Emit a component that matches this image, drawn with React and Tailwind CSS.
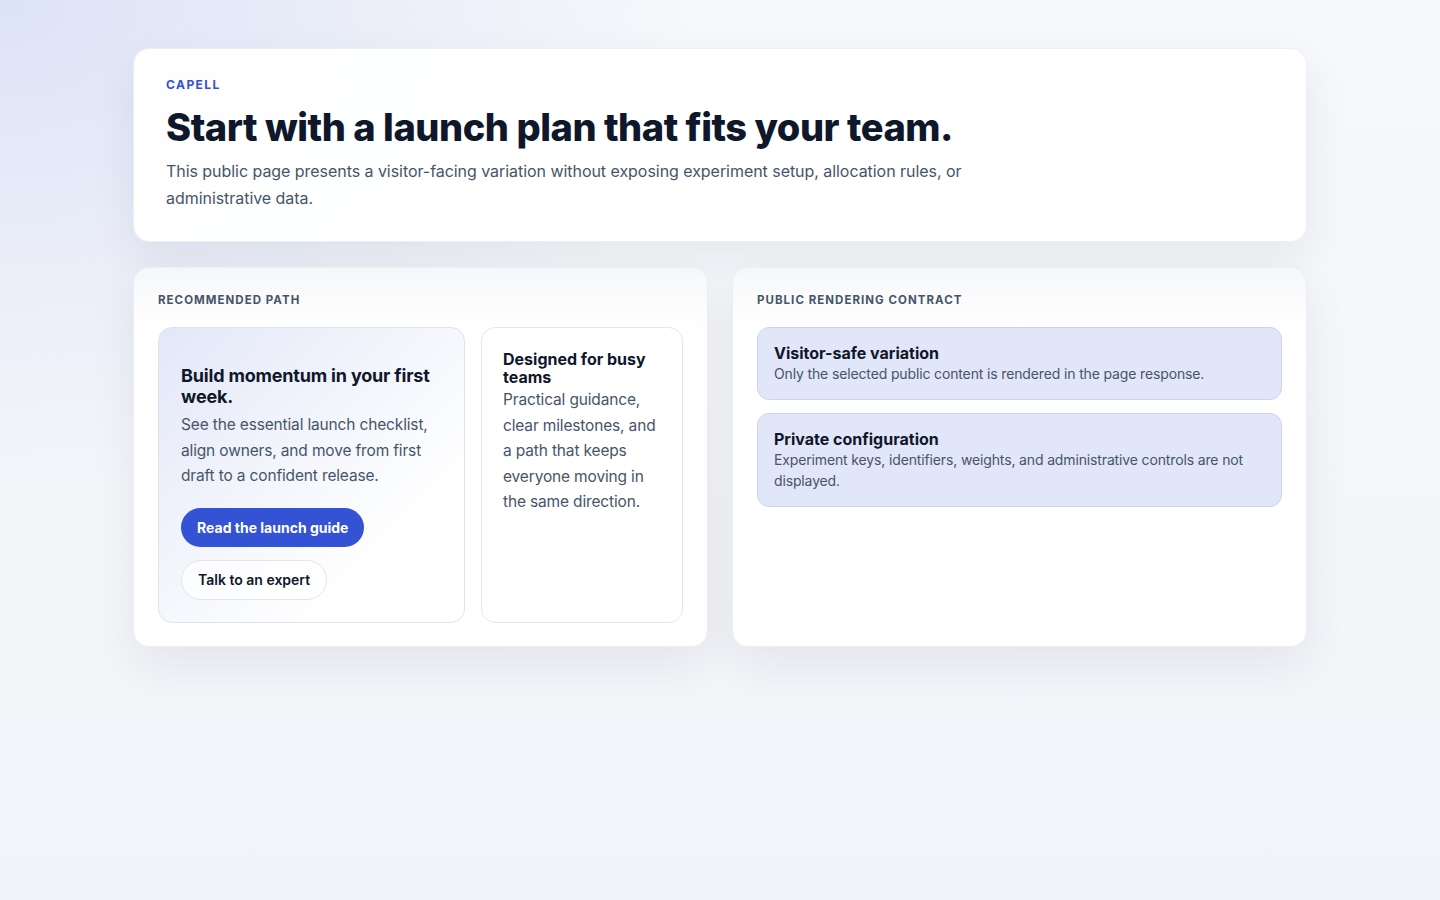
export default function App() {
  return (
    <div
      className="min-h-screen w-full bg-[radial-gradient(ellipse_700px_500px_at_0%_0%,#dde3f7,rgba(240,242,250,0)_100%),linear-gradient(180deg,#f7f8fb,#f3f4f9)] pt-12 pb-12 text-[#0f172a]"
      style={{ fontFamily: 'Inter, "Noto Sans", "Liberation Sans", sans-serif' }}
    >
      <div className="mx-auto flex w-[1174px] flex-col gap-[25px]">
        {/* Hero */}
        <section className="rounded-2xl border border-[#eceef3] bg-white/95 px-8 pt-[28px] pb-[29px] shadow-[0_18px_45px_rgba(15,23,42,0.07)]">
          <div className="text-[12px] font-bold uppercase leading-[16px] tracking-[0.12em] text-[#3450d6]">
            Capell
          </div>
          <h1 className="mt-[11px] text-[38px] font-extrabold leading-[46px] tracking-[-0.012em] text-[#0f172a]">
            Start with a launch plan that fits your team.
          </h1>
          <p className="mt-[8px] max-w-[830px] text-[16px] leading-[27px] tracking-[-0.003em] text-[#475569]">
            This public page presents a visitor-facing variation without exposing experiment setup, allocation rules, or administrative data.
          </p>
        </section>

        <div className="grid grid-cols-2 gap-6">
          {/* Recommended path */}
          <section className="h-[380px] rounded-2xl border border-[#eceef3] bg-[linear-gradient(180deg,#f6f7f9_0px,#ffffff_60px)] p-6 shadow-[0_18px_45px_rgba(15,23,42,0.07)]">
            <div className="text-[11.5px] font-bold uppercase leading-[16px] tracking-[0.09em] text-[#475569]">
              Recommended path
            </div>
            <div className="mt-[19px] grid h-[295px] grid-cols-[307px_1fr] gap-4">
              <div className="rounded-[14px] border border-[#dfe2ea] bg-[linear-gradient(135deg,#e3e7f8_0%,#f4f6fc_45%,#ffffff_75%)] px-[22px] pt-[37px] pb-[22px]">
                <h2 className="text-[18px] font-bold leading-[21px] tracking-[-0.01em] text-[#0f172a]">
                  Build momentum in your first week.
                </h2>
                <p className="mt-[5px] text-[15.5px] leading-[25.5px] tracking-[-0.01em] text-[#475569]">
                  See the essential launch checklist, align owners, and move from first draft to a confident release.
                </p>
                <div className="mt-[19px] flex flex-col items-start gap-[13px]">
                  <button className="h-[39px] rounded-full bg-[#3452d4] px-4 text-[14px] font-bold text-white">
                    Read the launch guide
                  </button>
                  <button className="h-[40px] rounded-full border border-[#e3e5ea] bg-white/70 px-4 text-[14px] font-semibold text-[#0f172a]">
                    Talk to an expert
                  </button>
                </div>
              </div>
              <div className="rounded-[14px] border border-[#e5e7ed] bg-white px-[21px] pt-[22px]">
                <h2 className="text-[16px] font-bold leading-[18px] text-[#0f172a]">
                  Designed for busy teams
                </h2>
                <p className="mt-[1px] text-[15.5px] leading-[25.5px] tracking-[-0.01em] text-[#475569]">
                  Practical guidance, clear milestones, and a path that keeps everyone moving in the same direction.
                </p>
              </div>
            </div>
          </section>

          {/* Public rendering contract */}
          <section className="h-[380px] rounded-2xl border border-[#eceef3] bg-[linear-gradient(180deg,#f6f7f9_0px,#ffffff_60px)] p-6 shadow-[0_18px_45px_rgba(15,23,42,0.07)]">
            <div className="text-[11.5px] font-bold uppercase leading-[16px] tracking-[0.09em] text-[#475569]">
              Public rendering contract
            </div>
            <div className="mt-[19px] flex flex-col gap-[13px]">
              <div className="rounded-[12px] border border-[#cdd4ef] bg-[#e1e6f8] px-4 pt-[15px] pb-[15px]">
                <h3 className="text-[16px] font-bold leading-[20px] text-[#0f172a]">Visitor-safe variation</h3>
                <p className="text-[14px] leading-[21px] tracking-[-0.01em] text-[#475569]">
                  Only the selected public content is rendered in the page response.
                </p>
              </div>
              <div className="rounded-[12px] border border-[#cdd4ef] bg-[#e1e6f8] px-4 pt-[15px] pb-[15px]">
                <h3 className="text-[16px] font-bold leading-[20px] text-[#0f172a]">Private configuration</h3>
                <p className="text-[14px] leading-[21px] tracking-[-0.01em] text-[#475569]">
                  Experiment keys, identifiers, weights, and administrative controls are not displayed.
                </p>
              </div>
            </div>
          </section>
        </div>
      </div>
    </div>
  );
}
